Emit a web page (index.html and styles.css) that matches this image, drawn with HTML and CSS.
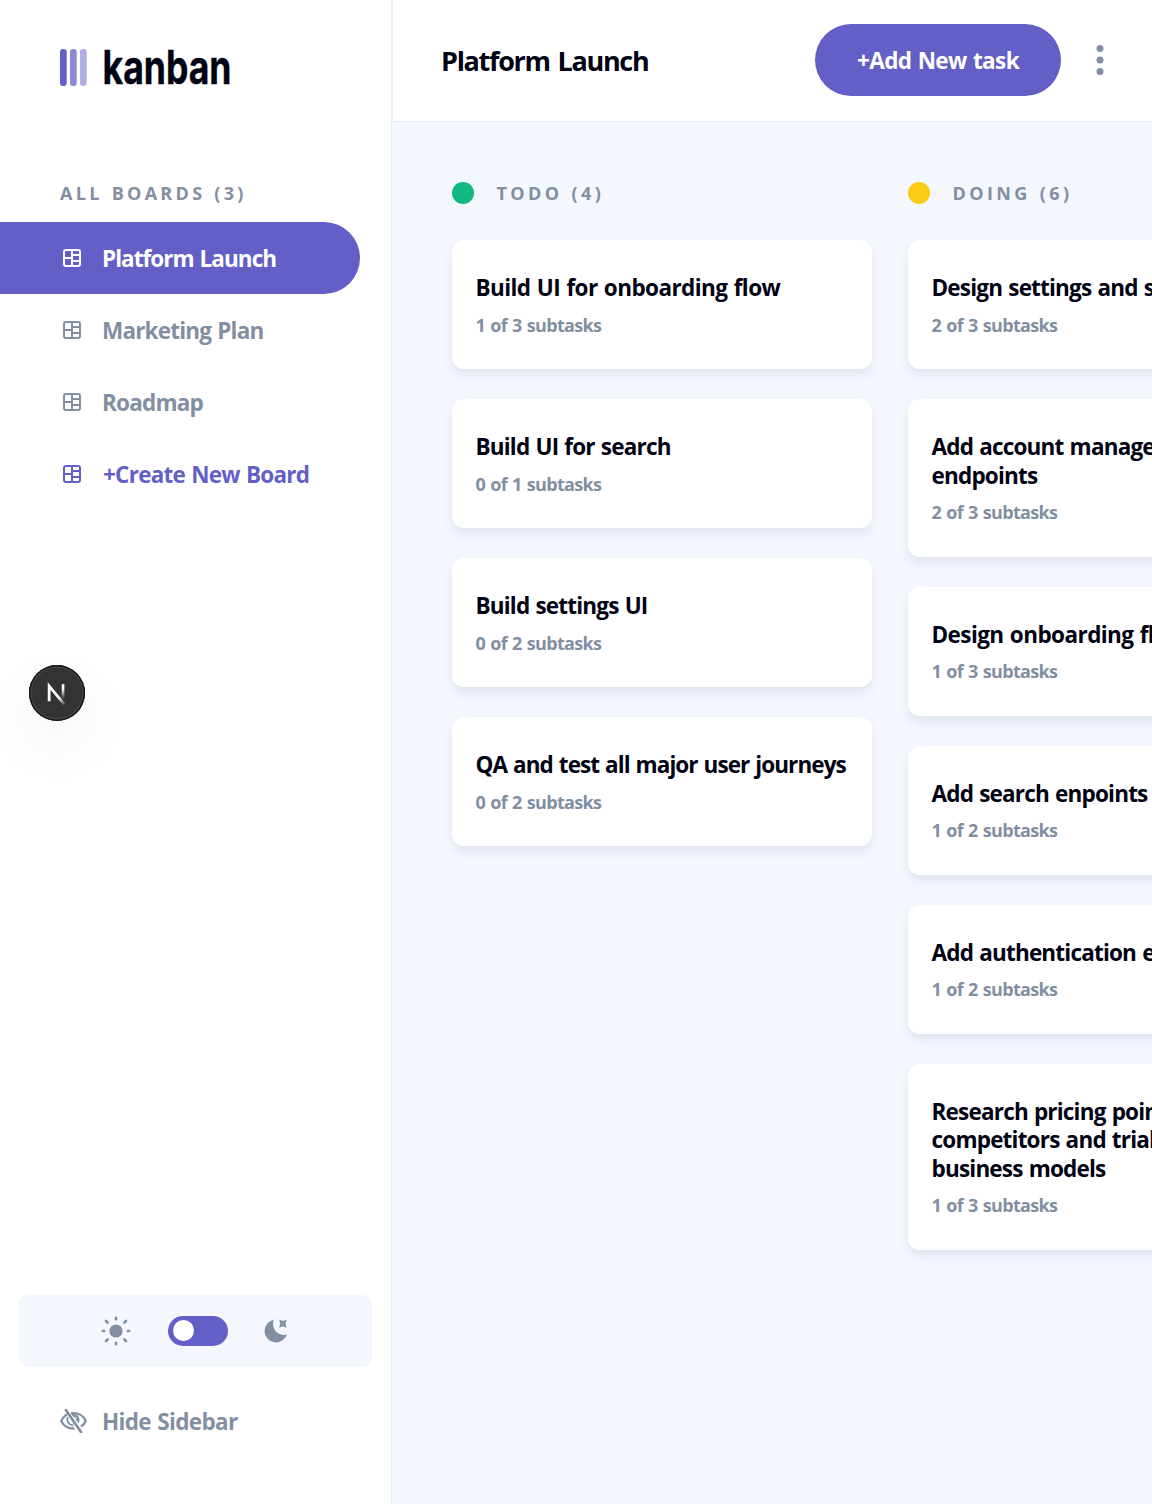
FILE: index.html
```html
<!DOCTYPE html>
<html lang="en">
<head>
<meta charset="utf-8">
<title>Kanban</title>
<link rel="stylesheet" href="styles.css">
</head>
<body>
<svg class="defs" aria-hidden="true">
  <symbol id="board" viewBox="0 0 18 18">
    <g fill="none" stroke="currentColor" stroke-width="2"><rect x="1" y="1" width="16" height="16" rx="2"/><path d="M9 1v16M1 9h8M9 6h8M9 12h8"/></g>
  </symbol>
</svg>
<div class="app">
  <aside class="sidebar">
    <svg class="logo" width="200" height="48" viewBox="0 0 200 48">
      <rect x="0" y="7" width="6.7" height="37" rx="3" fill="#635fc7"/>
      <rect x="10" y="7" width="6.7" height="37" rx="3" fill="#635fc7" opacity=".75"/>
      <rect x="20" y="7" width="6.7" height="37" rx="3" fill="#635fc7" opacity=".5"/>
      <text class="logo-text" x="42.5" y="42.2" textLength="129" lengthAdjust="spacingAndGlyphs">kanban</text>
    </svg>
    <h2 class="label boards-label">ALL BOARDS (3)</h2>
    <nav class="boards">
      <a class="board active"><svg class="icon"><use href="#board"/></svg><span>Platform Launch</span></a>
      <a class="board"><svg class="icon"><use href="#board"/></svg><span>Marketing Plan</span></a>
      <a class="board"><svg class="icon"><use href="#board"/></svg><span>Roadmap</span></a>
      <a class="board create"><svg class="icon"><use href="#board"/></svg><span>+Create New Board</span></a>
    </nav>
    <div class="theme">
      <svg class="sun" viewBox="-15 -15 30 30" width="30" height="30">
        <circle r="6.6" fill="currentColor"/>
        <path d="M0-13.2v1.400M0 11.8v1.400M-13.2 0h1.400M11.8 0h1.400M-10-10l1.700 1.700M8.300 8.300l1.700 1.700M-10 10l1.700-1.700M8.300-8.300l1.700-1.700" stroke="currentColor" stroke-width="2.600" stroke-linecap="round"/>
      </svg>
      <span class="toggle"><span class="knob"></span></span>
      <svg class="moon" viewBox="0 0 24 24" width="24" height="24" fill="currentColor">
        <path d="M9.600.700A11.500 11.500 0 1 0 23 15.300C15 18 7 11 9.600.700Z"/>
        <path d="M15 .500 18.900 2 22.800.500 21.400 4.600 22.800 8.700 18.900 7.200 15 8.700 16.400 4.600Z"/>
      </svg>
    </div>
    <a class="hide">
      <svg width="27" height="24" viewBox="0 0 27 24" fill="none" stroke="currentColor">
        <path d="M7 5.200C4.500 6.700 2.600 8.900 1.200 12c2.300 4.800 7 7.700 13.300 7.600M11 4.400c7-1.100 12.500 2 14.800 7.600-1 2.400-2.700 4.300-4.800 5.700" stroke-width="2.200"/>
        <path d="M7.800 8.200c-1.600 4 .500 7.200 5.400 8.300" stroke-width="1.800"/>
        <path d="M11.300 5.500c5.500-1.800 10.200 2.500 7.400 9.100l-3.200-4.300 1.500-2.100-2.800.2Z" fill="currentColor" stroke="none"/>
        <path d="M6 1.200 21 23" stroke-width="2.800" stroke-linecap="round"/>
      </svg>
      <span>Hide Sidebar</span>
    </a>
    <div class="dev-badge">
      <svg width="56" height="56" viewBox="0 0 57 57" fill="none">
        <defs>
          <linearGradient id="fade1" x1="0" y1="0" x2="0" y2="1"><stop offset=".3" stop-color="#fff"/><stop offset="1" stop-color="#fff" stop-opacity="0"/></linearGradient>
          <linearGradient id="fade2" x1="19" y1="19" x2="37" y2="41" gradientUnits="userSpaceOnUse"><stop offset=".65" stop-color="#fff"/><stop offset="1" stop-color="#fff" stop-opacity="0"/></linearGradient>
        </defs>
        <path d="M20.500 37V21.500L36 40" stroke="url(#fade2)" stroke-width="2.800"/>
        <rect x="33.300" y="19.500" width="2.700" height="15" fill="url(#fade1)"/>
      </svg>
    </div>
  </aside>
  <main class="main">
    <header class="header">
      <h1 class="title">Platform Launch</h1>
      <button class="add">+Add New task</button>
      <svg class="dots" width="8" height="32" viewBox="0 0 8 32" fill="currentColor"><circle cx="4" cy="4.500" r="3.500"/><circle cx="4" cy="16" r="3.500"/><circle cx="4" cy="27.500" r="3.500"/></svg>
    </header>
    <div class="columns">
      <section class="column">
        <h2 class="label column-label"><i class="dot green"></i>TODO (4)</h2>
        <article class="card"><h3 class="loose">Build UI for onboarding flow</h3><p>1 of 3 subtasks</p></article>
        <article class="card"><h3>Build UI for search</h3><p>0 of 1 subtasks</p></article>
        <article class="card"><h3>Build settings UI</h3><p>0 of 2 subtasks</p></article>
        <article class="card"><h3 class="tight">QA and test all major user journeys</h3><p>0 of 2 subtasks</p></article>
      </section>
      <section class="column">
        <h2 class="label column-label"><i class="dot yellow"></i>DOING (6)</h2>
        <article class="card"><h3>Design settings and search pages</h3><p>2 of 3 subtasks</p></article>
        <article class="card"><h3>Add account management<br>endpoints</h3><p>2 of 3 subtasks</p></article>
        <article class="card"><h3 class="loose">Design onboarding flow</h3><p>1 of 3 subtasks</p></article>
        <article class="card"><h3>Add search enpoints</h3><p>1 of 2 subtasks</p></article>
        <article class="card"><h3>Add authentication endpoints</h3><p>1 of 2 subtasks</p></article>
        <article class="card"><h3>Research pricing points of<br>competitors and trial different<br>business models</h3><p>1 of 3 subtasks</p></article>
      </section>
    </div>
  </main>
</div>
</body>
</html>
```
FILE: styles.css
```css
* { box-sizing: border-box; margin: 0; padding: 0; }
body {
  font-family: "Open Sans", "Noto Sans", sans-serif;
  font-weight: 700;
  font-size: 22.5px;
  letter-spacing: -0.8px;
  word-spacing: 1px;
  color: #000112;
  background: #f4f7fd;
  overflow: hidden;
}
.defs { position: absolute; width: 0; height: 0; }
.app { display: flex; height: 1504px; }

.sidebar {
  position: relative;
  display: flex;
  flex-direction: column;
  flex: 0 0 392px;
  background: #fff;
  border-right: 1px solid #e4ebfa;
  color: #828fa3;
}
.logo { display: block; margin: 42px 0 0 60px; overflow: visible; }
.logo-text { font: 700 47px Inter, sans-serif; letter-spacing: 0; word-spacing: 0; fill: #000112; stroke: #000112; stroke-width: .4px; }
.label {
  font-size: 18px;
  line-height: 24px;
  letter-spacing: 3.4px;
  color: #828fa3;
  white-space: nowrap;
}
.boards-label { margin: 91px 0 17px 60px; letter-spacing: 3.3px; }
.board { display: flex; align-items: center; width: 360px; height: 72px; padding-left: 63px; }
.board span { margin-left: 21px; padding-top: 2px; line-height: 30px; }
.board.active { background: #635fc7; color: #fff; border-radius: 0 36px 36px 0; letter-spacing: -0.95px; }
.board.create { color: #635fc7; letter-spacing: -0.75px; }
.board.create span { margin-left: 22px; }
.icon { width: 18px; height: 18px; }
.theme {
  display: flex;
  align-items: center;
  height: 72px;
  margin: auto 19px 0;
  padding-left: 82px;
  background: #f4f7fd;
  border-radius: 9px;
}
.sun { margin-bottom: 1px; }
.toggle { width: 60px; height: 30px; margin: 0 36px 0 37px; padding: 4px 5px; border-radius: 15px; background: #635fc7; }
.knob { display: block; width: 21px; height: 21px; border-radius: 50%; background: #fff; }
.hide { display: flex; align-items: center; gap: 15px; height: 72px; margin: 18px 0 47px 60px; letter-spacing: -0.65px; }

.dev-badge {
  position: absolute;
  left: 29px;
  top: 665px;
  width: 56px;
  height: 56px;
  border-radius: 50%;
  background: #333;
  box-shadow: inset 0 0 0 1.5px #171717, inset 0 0 0 2.5px #4a4a4a, 0 24px 60px -2px rgba(0, 0, 0, .07);
}
.dev-badge svg { display: block; }

.main { flex: 1; min-width: 0; overflow: hidden; }
.header {
  display: flex;
  align-items: center;
  height: 122px;
  padding: 0 48px;
  background: #fff;
  border-left: 1px solid #e4ebfa;
  border-bottom: 1px solid #e4ebfa;
}
.title { font-size: 27px; line-height: 36px; letter-spacing: -1.3px; word-spacing: 2px; }
.add {
  width: 246px;
  height: 72px;
  margin: 0 35px 1px auto;
  padding-top: 1px;
  border: 0;
  border-radius: 36px;
  background: #635fc7;
  color: #fff;
  font: inherit;
  letter-spacing: -0.6px;
  word-spacing: 1px;
}
.dots { color: #828fa3; margin-bottom: 1px; }
.columns { display: flex; gap: 36px; padding: 59px 0 0 60px; }
.column { display: flex; flex-direction: column; gap: 30px; flex: 0 0 420px; }
.column-label { display: flex; align-items: center; height: 24px; margin-bottom: 5px; }
.dot { width: 22px; height: 22px; border-radius: 50%; margin-right: 22.5px; }
.green { background: #10b981; }
.yellow { background: #facc15; }
.card {
  padding: 34px 23.5px 30.5px;
  background: #fff;
  border-radius: 12px;
  box-shadow: 0 6px 9px rgba(54, 78, 126, .1015);
}
.card h3 { font-size: 22.5px; line-height: 28.5px; white-space: nowrap; }
.card h3.loose { letter-spacing: -0.57px; }
.card h3.tight { letter-spacing: -0.92px; }
.card p { margin-top: 9px; font-size: 18px; line-height: 27px; letter-spacing: -0.65px; color: #828fa3; }
```
